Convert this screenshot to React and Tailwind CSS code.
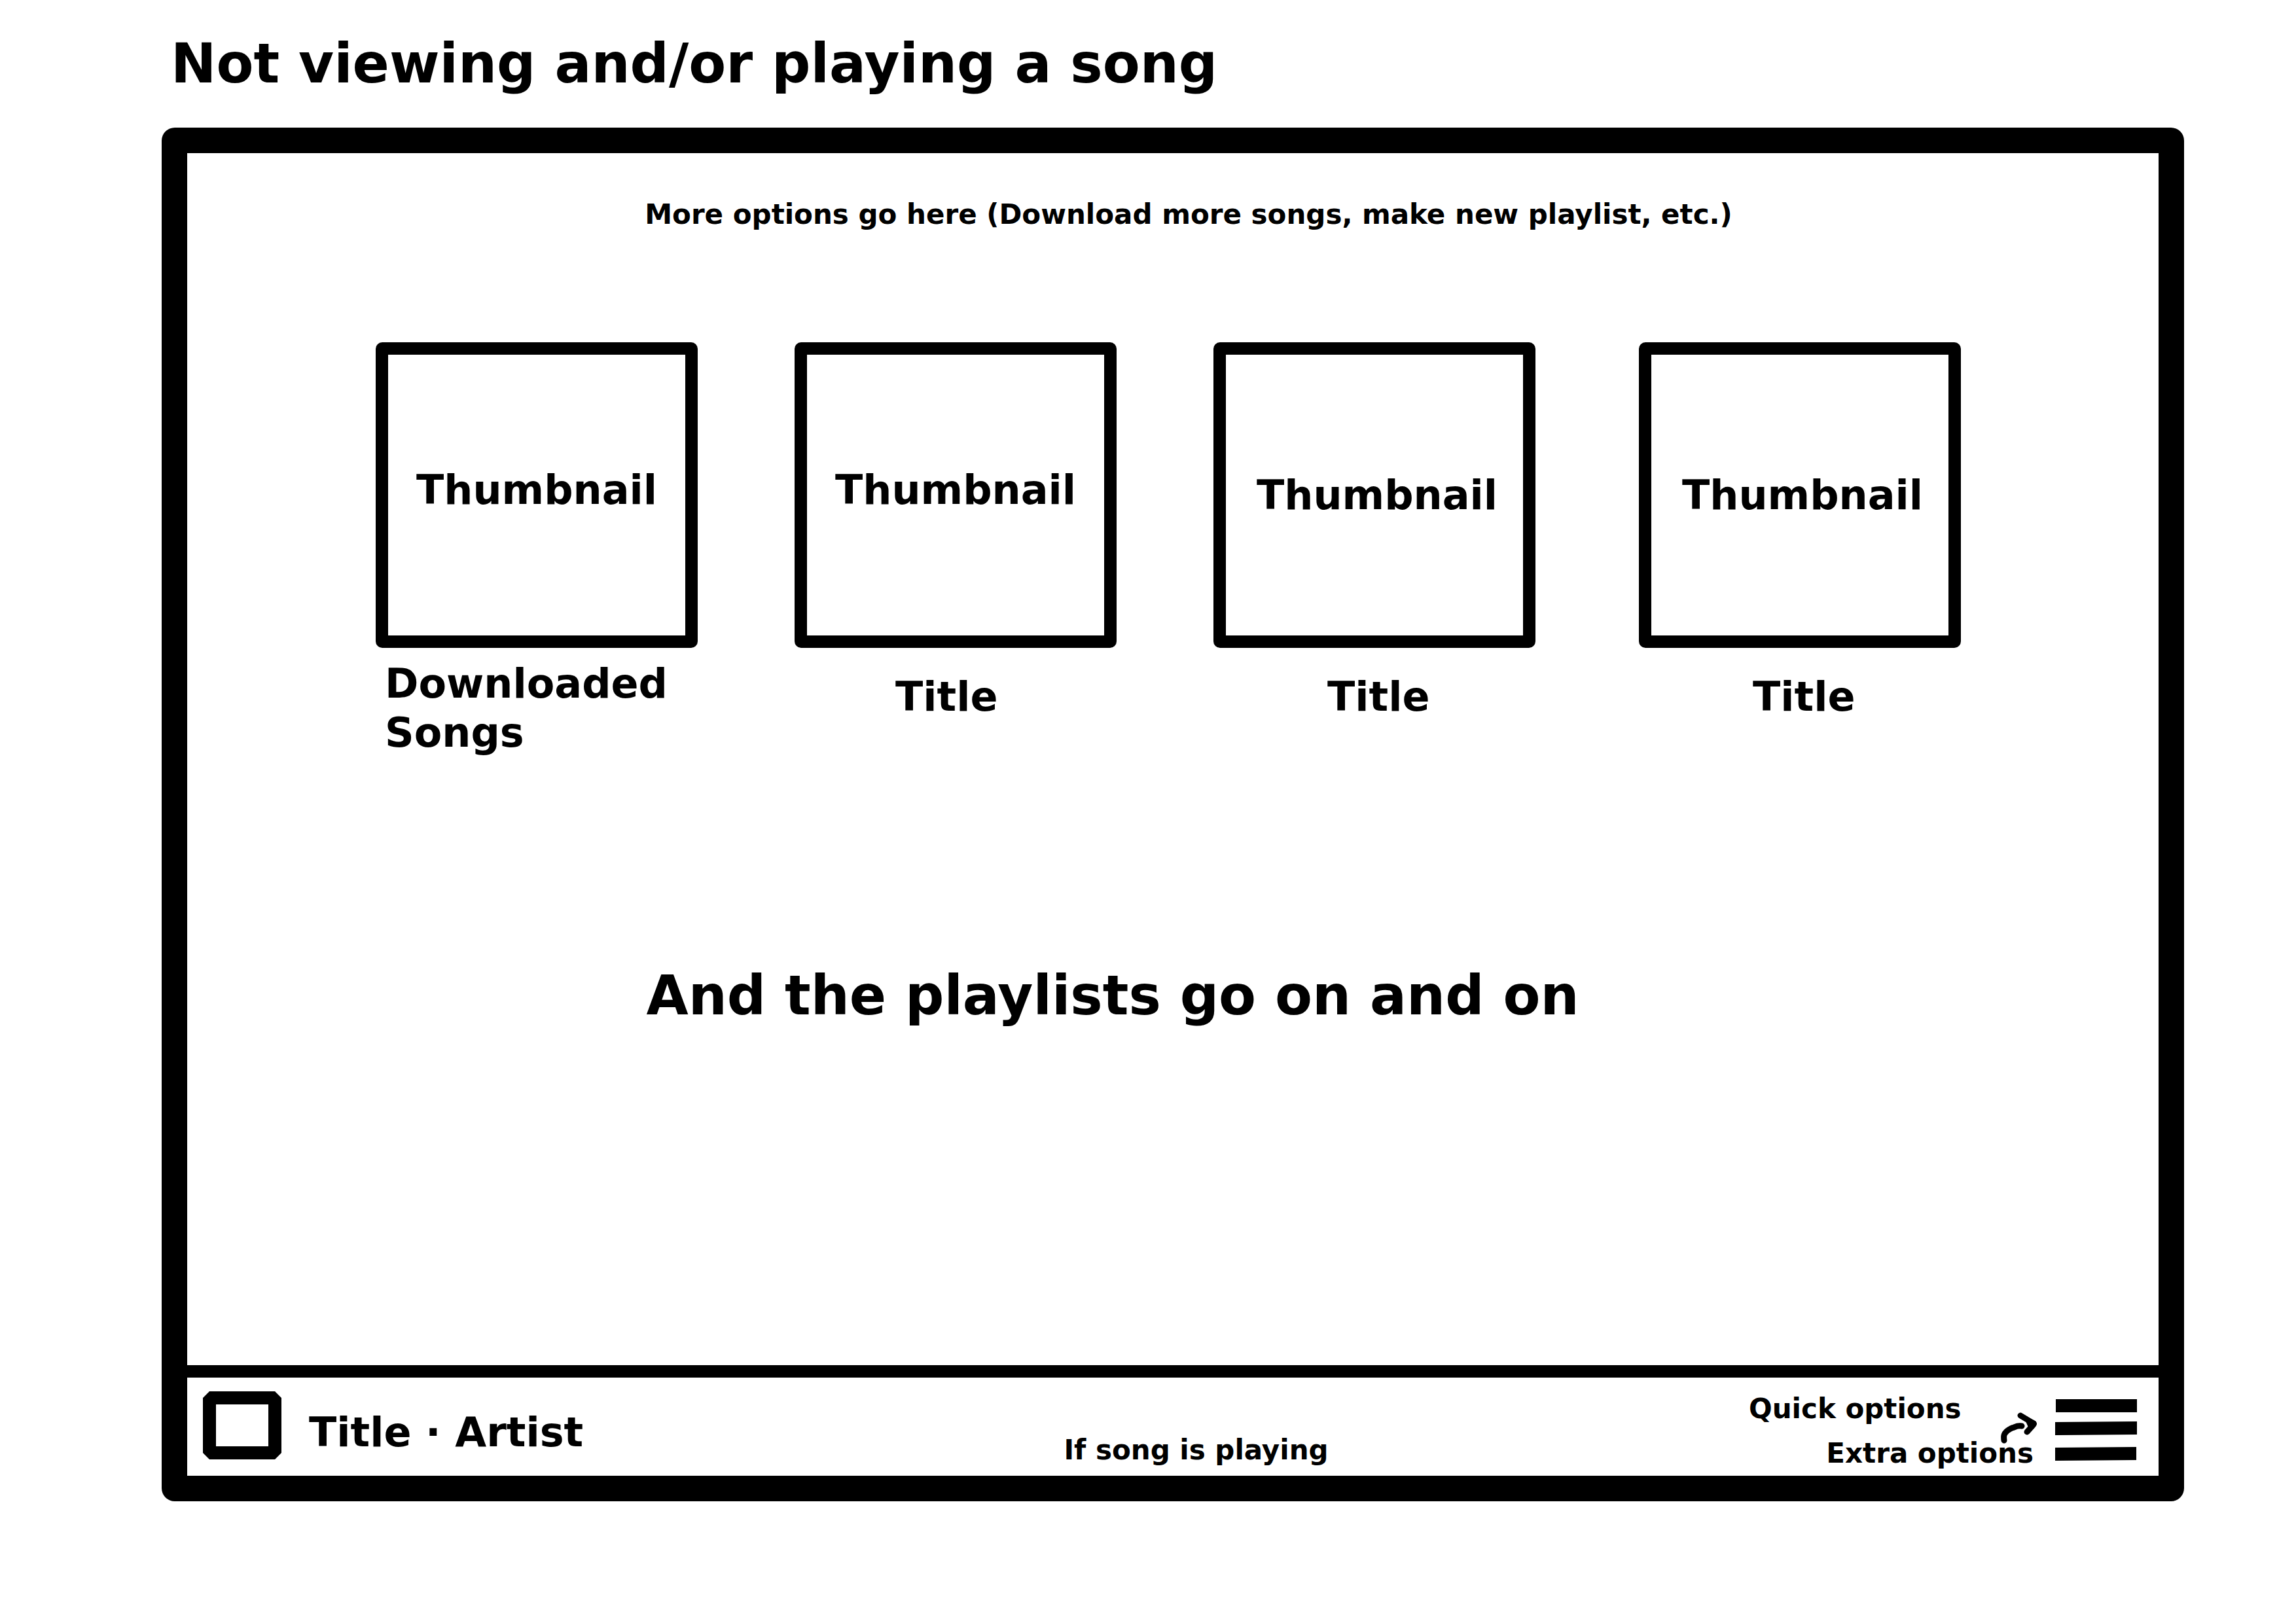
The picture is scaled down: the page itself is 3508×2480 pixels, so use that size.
const playlists = [
  { title: 'Downloaded Songs', thumbnail: 'pb-4', caption: 'mt-[17px] pl-3.5' },
  { title: 'Title', thumbnail: 'pb-4', caption: 'mt-[37px] pl-[154px]' },
  { title: 'Title', thumbnail: 'pl-2', caption: 'mt-[37px] pl-[174px]' },
  { title: 'Title', thumbnail: 'pl-2', caption: 'mt-[37px] pl-[174px]' },
];

function PlaylistCard({ title, thumbnail, caption }) {
  return (
    <li className="w-[492px]">
      <button type="button" className="block w-full text-left text-[62px] leading-[75px] font-bold">
        <span
          className={`flex h-[467px] items-center justify-center rounded-[10px] border-[19px] border-black ${thumbnail}`}
        >
          Thumbnail
        </span>
        <span className={`block ${caption}`}>{title}</span>
      </button>
    </li>
  );
}

function CoverIcon() {
  return (
    <svg viewBox="0 0 120 104" className="mt-[21px] h-[104px] w-[120px] shrink-0" aria-hidden="true">
      <rect x="10" y="10" width="100" height="84" fill="none" stroke="black" strokeWidth="20" strokeLinejoin="bevel" />
    </svg>
  );
}

function ArrowIcon() {
  return (
    <svg
      viewBox="0 0 56 48"
      className="absolute top-[53px] -right-1.5 h-12 w-14"
      fill="none"
      stroke="black"
      strokeWidth="9"
      strokeLinecap="round"
      strokeLinejoin="round"
      aria-hidden="true"
    >
      <path d="M5 43C4 35 5 33 9 29C12 27 14 25 17 24C22 23 23 20 32 21" />
      <path d="M30 5L50 17Q51 18 49 20L40 30" />
      <path d="M43 14L50 17L46 21Z" />
    </svg>
  );
}

function MenuIcon() {
  return (
    <svg viewBox="0 0 125 94" className="h-[94px] w-[125px]" aria-hidden="true">
      <path d="M1 0H125V20H1Z" />
      <path d="M0 35L125 34V54L0 55Z" />
      <path d="M0 74L124 73V93L0 94Z" />
    </svg>
  );
}

export default function App() {
  return (
    <div className="flex min-h-screen flex-col bg-white pt-12 pr-[171px] pb-[186px] pl-[247px] font-['DejaVu_Sans',sans-serif] font-bold text-black">
      <h1 className="pl-3.5 text-[83px] leading-[100px]">Not viewing and/or playing a song</h1>

      <div className="mt-[47px] flex grow flex-col rounded-[20px] border-[39px] border-black">
        <main className="grow">
          <p className="pt-[69px] pl-12 text-center text-[42px] leading-[50px]">
            More options go here (Download more songs, make new playlist, etc.)
          </p>
          <ul className="mt-[170px] grid grid-cols-[640fr_640fr_650fr_492fr] pr-[302px] pl-72">
            {playlists.map((playlist, index) => (
              <PlaylistCard key={index} {...playlist} />
            ))}
          </ul>
          <p className="mt-[315px] pr-[184px] text-center text-[83px] leading-[100px]">
            And the playlists go on and on
          </p>
        </main>

        <footer className="grid h-[169px] grid-cols-[1fr_auto_1fr] border-t-[19px] border-black pr-[33px] pl-6">
          <div className="flex items-start gap-[42px]">
            <CoverIcon />
            <p className="mt-[46px] text-[62px] leading-[75px]">Title · Artist</p>
          </div>
          <p className="mt-[86px] pl-20 text-[42px] leading-[50px]">If song is playing</p>
          <div className="flex items-start justify-end gap-[33px]">
            <div className="relative flex w-[435px] flex-col gap-[18px] pt-[23px] text-[42px] leading-[50px]">
              <button type="button" className="self-start">Quick options</button>
              <button type="button" className="self-end">Extra options</button>
              <ArrowIcon />
            </div>
            <button type="button" aria-label="Menu" className="mt-[33px]">
              <MenuIcon />
            </button>
          </div>
        </footer>
      </div>
    </div>
  );
}
